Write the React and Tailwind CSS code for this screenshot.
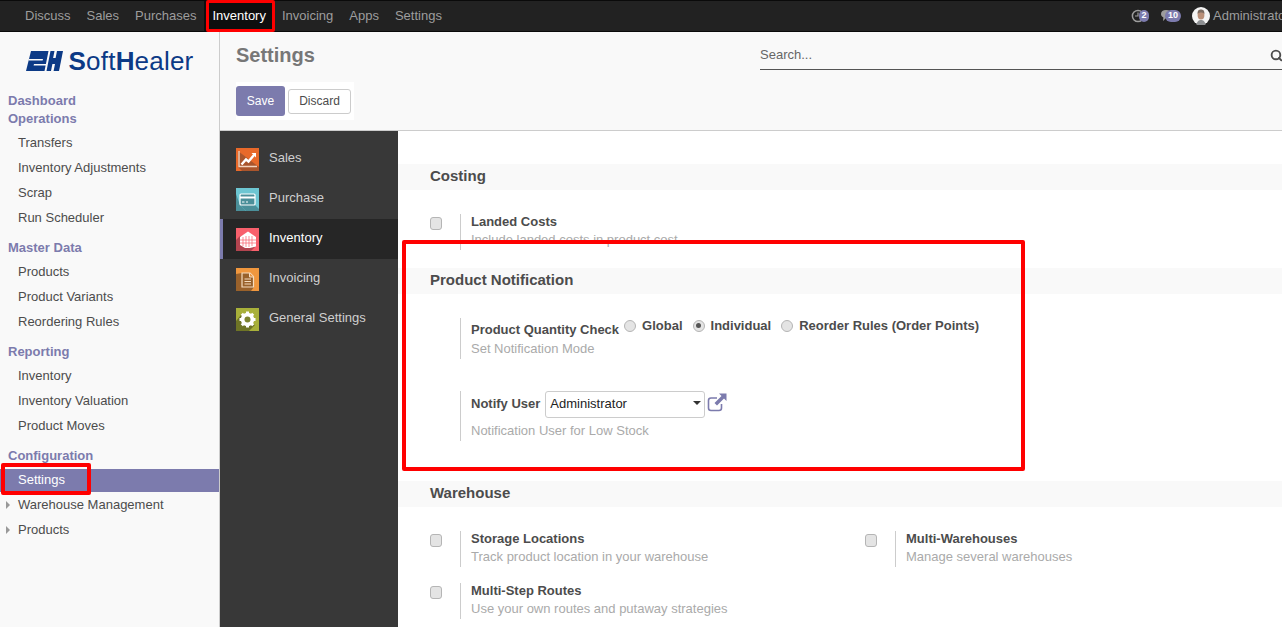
import { Search } from 'lucide-react';

const topMenu = ['Discuss', 'Sales', 'Purchases', 'Inventory', 'Invoicing', 'Apps', 'Settings'];

const sideMenu = [
  { title: 'Operations', items: ['Transfers', 'Inventory Adjustments', 'Scrap', 'Run Scheduler'] },
  { title: 'Master Data', items: ['Products', 'Product Variants', 'Reordering Rules'] },
  { title: 'Reporting', items: ['Inventory', 'Inventory Valuation', 'Product Moves'] },
];

// little app icons with the long shadow
const SalesIcon = () => (
  <svg width="23" height="23" viewBox="0 0 23 23">
    <rect width="23" height="23" fill="#e8692a" />
    <path d="M2 3 V19 L6 23 H23 V19 Z" fill="#a9552c" />
    <path d="M3 3 V18.5 H21" fill="none" stroke="#f3d3bd" strokeWidth="1.4" />
    <path d="M5.5 16.5 L10 11.5 L12.5 13.5 L18 7" fill="none" stroke="#fff" strokeWidth="2.4" />
    <path d="M15.5 5 H20 V9.5 Z" fill="#fff" />
  </svg>
);

const PurchaseIcon = () => (
  <svg width="23" height="23" viewBox="0 0 23 23">
    <rect width="23" height="23" fill="#6dc6d2" />
    <path d="M4 17 L10 23 H0 V6 Z" fill="#4b8f99" />
    <path d="M4 17 H19 L23 21 V23 H10 Z" fill="#4b8f99" />
    <rect x="4" y="6" width="15" height="11" rx="1" fill="#4b8f99" stroke="#fff" strokeWidth="1.2" />
    <rect x="4" y="8.5" width="15" height="2" fill="#fff" />
    <path d="M6 14 H8.5 M10 14 H12" stroke="#fff" strokeWidth="1" />
  </svg>
);

const InventoryIcon = () => (
  <svg width="23" height="23" viewBox="0 0 23 23">
    <rect width="23" height="23" fill="#f8606c" />
    <path d="M0 12 L4 8 L20 18 L15 23 H0 Z" fill="#b2444f" />
    <path d="M4 9 L12 3.5 L20 9 V18.5 L14 20 H9 L4 17 Z" fill="#fff" />
    <path d="M7 9 V18 M10 8 V19 M13 8 V19 M16 8 V18 M4 12 H20 M4 15 H20" stroke="#f8606c" strokeWidth="0.7" />
  </svg>
);

const InvoicingIcon = () => (
  <svg width="23" height="23" viewBox="0 0 23 23">
    <rect width="23" height="23" fill="#f0973e" />
    <path d="M0 6 L6 5 L18 19 L15 23 H0 Z" fill="#99612b" />
    <path d="M6 5 H14 L17.5 8.5 V19 H6 Z" fill="#99612b" stroke="#f5dcc0" strokeWidth="1.2" />
    <path d="M13.5 5 V9 H17.5" fill="#f0973e" stroke="#f5dcc0" strokeWidth="1" />
    <path d="M8.5 11 H15 M8.5 13.5 H15 M8.5 16 H15" stroke="#f5dcc0" strokeWidth="1.2" />
  </svg>
);

const GeneralIcon = () => (
  <svg width="23" height="23" viewBox="0 0 23 23">
    <rect width="23" height="23" fill="#a8b03a" />
    <path d="M0 13 L5 7 L19 17 L13 23 H0 Z" fill="#6e7426" />
    <circle cx="11.5" cy="11.5" r="5" fill="none" stroke="#fff" strokeWidth="3.4" />
    <path d="M11.5 3.5 V19.5 M3.5 11.5 H19.5 M5.8 5.8 L17.2 17.2 M17.2 5.8 L5.8 17.2" stroke="#fff" strokeWidth="3" />
    <circle cx="11.5" cy="11.5" r="3" fill="#7d8430" />
  </svg>
);

const settingsTabs = [
  { label: 'Sales', Icon: SalesIcon },
  { label: 'Purchase', Icon: PurchaseIcon },
  { label: 'Inventory', Icon: InventoryIcon, active: true },
  { label: 'Invoicing', Icon: InvoicingIcon },
  { label: 'General Settings', Icon: GeneralIcon },
];

const Logo = () => (
  <div className="flex items-center h-[20px]">
    <svg width="37" height="20" viewBox="0 0 37 20" className="mr-[6px]">
      <path d="M5 0 H37 L33 20 H0 Z" fill="#0c3a86" />
      <path d="M3 8 H17 L16.6 9.5 H2.6 Z M8 13 H21 L20.6 14.5 H7.6 Z M22.5 0 H24.5 L20.5 20 H18.5 Z M28.5 0 H31 L29.6 7 H27.1 Z M26.4 13 H29 L27.6 20 H25 Z" fill="#fafafa" />
    </svg>
    <span className="text-[26px] leading-none text-[#0c3a86] tracking-[0.2px]">
      <span className="font-bold">S</span>oft<span className="font-bold">H</span>ealer
    </span>
  </div>
);

const Avatar = () => (
  <svg width="18" height="18" viewBox="0 0 18 18">
    <circle cx="9" cy="9" r="9" fill="#f4f4f4" />
    <path d="M4.5 18 C5 14 7 13 9 13 C11 13 13 14 13.5 18 Z" fill="#8d8f92" />
    <ellipse cx="9" cy="8" rx="3.4" ry="4.6" fill="#b98f78" />
    <path d="M5.6 7 C5.4 3 7 2.4 9 2.4 C11 2.4 12.6 3 12.4 7 C11.5 5 6.5 5 5.6 7 Z" fill="#7a6a60" />
  </svg>
);

const Check = () => (
  <span className="block w-[12px] h-[13px] rounded-[3px] bg-[#e4e4e4] border border-[#b5b5b5]" />
);

const Radio = ({ checked }) => (
  <span className="flex items-center justify-center w-[12px] h-[12px] rounded-full bg-[#e4e4e4] border border-[#b5b5b5]">
    {checked && <span className="block w-[5px] h-[5px] rounded-full bg-[#555]" />}
  </span>
);

const Setting = ({ title, help }) => (
  <div className="flex h-[36px]">
    <div className="w-[30px] pt-[3px]">
      <Check />
    </div>
    <div className="border-l border-[#ccc] pl-[10px]">
      <div className="font-bold leading-[15px] text-[#4c4c4c]">{title}</div>
      <div className="mt-[3px] leading-[15px] text-[#aaa]">{help}</div>
    </div>
  </div>
);

const SectionTitle = ({ children }) => (
  <div className="h-[26px] bg-[#f9f9f9] pl-[32px] text-[15px] font-bold leading-[24px] text-[#4c4c4c]">
    {children}
  </div>
);

export default function App() {
  return (
    <div className="relative w-[1282px] h-[627px] overflow-hidden bg-white font-['Liberation_Sans',Arial,sans-serif] text-[13px] text-[#4c4c4c]">
      {/* top bar */}
      <nav className="flex items-center justify-between h-[32px] pl-[17px] bg-[#222] border-y border-[#0a0a0a]">
        <ul className="flex h-full">
          {topMenu.map((item) => (
            <li
              key={item}
              className={`flex items-center px-[8px] ${item === 'Inventory' ? 'bg-[#0e0e0e] text-white' : 'text-[#9d9d9d]'}`}
            >
              {item}
            </li>
          ))}
        </ul>
        <div className="flex items-center w-[151px] shrink-0 overflow-hidden whitespace-nowrap text-[#9d9d9d]">
          <div className="relative shrink-0 w-[18px] h-[14px] mr-[11px]">
            <svg width="14" height="14" viewBox="0 0 14 14" className="absolute left-0 top-0">
              <circle cx="7" cy="7" r="5.6" fill="none" stroke="#9d9d9d" strokeWidth="1.5" />
              <path d="M7 3.5 V7 H4" fill="none" stroke="#9d9d9d" strokeWidth="1.2" />
            </svg>
            <span className="absolute right-0 top-[1px] flex items-center justify-center w-[10px] h-[12px] rounded-full bg-[#7c7bad] text-[9px] font-bold text-white">2</span>
          </div>
          <div className="relative shrink-0 w-[21px] h-[14px] mr-[11px]">
            <svg width="12" height="13" viewBox="0 0 12 13" className="absolute left-0 top-0">
              <path d="M6 1 C9 1 11 2.6 11 5 C11 7.4 9 9 6 9 L3 12 L3.4 8.4 C1.8 7.6 1 6.4 1 5 C1 2.6 3 1 6 1 Z" fill="#9d9d9d" />
            </svg>
            <span className="absolute right-0 top-[1px] flex items-center justify-center w-[16px] h-[12px] rounded-full bg-[#7c7bad] text-[9px] font-bold text-white">10</span>
          </div>
          <div className="mr-[3px] w-[18px] h-[18px] shrink-0">
            <Avatar />
          </div>
          <span>Administrator</span>
        </div>
      </nav>

      <div className="flex h-[595px]">
        {/* left menu */}
        <aside className="w-[220px] shrink-0 h-full bg-[#f9f9f9] border-r border-[#ccc]">
          <div className="flex justify-center h-[59px] pt-[19px]">
            <Logo />
          </div>
          <div className="pl-[8px] h-[18px] font-bold leading-[20px] text-[#7c7bad]">Dashboard</div>
          {sideMenu.map((group) => (
            <div key={group.title} className="mb-[8px]">
              <div className="pl-[8px] h-[18px] mb-[3px] font-bold leading-[20px] text-[#7c7bad]">{group.title}</div>
              {group.items.map((item) => (
                <div key={item} className="h-[25px] pl-[18px] leading-[25px] text-[#4c4c4c]">{item}</div>
              ))}
            </div>
          ))}
          <div className="pl-[8px] h-[18px] mb-[5px] font-bold leading-[20px] text-[#7c7bad]">Configuration</div>
          <div className="h-[23px] pl-[18px] leading-[22px] bg-[#7c7bad] text-white">Settings</div>
          {['Warehouse Management', 'Products'].map((item) => (
            <div key={item} className="flex items-center h-[25px] pl-[6px]">
              <span className="w-0 h-0 mr-[8px] border-y-[4px] border-y-transparent border-l-[4px] border-l-[#999]" />
              <span>{item}</span>
            </div>
          ))}
        </aside>

        <main className="flex-1 min-w-0 flex flex-col">
          {/* control panel */}
          <header className="flex justify-between h-[99px] shrink-0 pl-[16px] bg-[#f9f9f9] border-b border-[#ccc]">
            <div>
              <h1 className="mt-[11px] text-[20px] font-bold leading-[24px] text-[#777]">Settings</h1>
              <div className="flex items-center w-[118px] h-[38px] mt-[15px] bg-white">
                <button className="w-[49px] h-[30px] rounded-[3px] bg-[#7c7bad] text-[12px] text-white">Save</button>
                <button className="w-[63px] h-[25px] ml-[3px] rounded-[3px] bg-white border border-[#ccc] text-[12px] text-[#4c4c4c]">Discard</button>
              </div>
            </div>
            <div className="flex items-center justify-between self-start w-[522px] h-[38px] pt-[9px] border-b border-[#555]">
              <span className="text-[#666]">Search...</span>
              <Search size={13} strokeWidth={3.4} className="shrink-0 text-[#4c4c4c] mr-[-1px]" />
            </div>
          </header>

          <div className="flex flex-1 min-h-0">
            {/* settings tabs */}
            <div className="w-[178px] shrink-0 bg-[#383838] pt-[8px]">
              {settingsTabs.map(({ label, Icon, active }) => (
                <div
                  key={label}
                  className={`flex items-center h-[40px] gap-[10px] ${active ? 'pl-[13px] border-l-[3px] border-[#7c7bad] bg-[#262626] text-white' : 'pl-[16px] text-[#cfcfcf]'}`}
                >
                  <Icon />
                  <span className="mb-[2px]">{label}</span>
                </div>
              ))}
            </div>

            {/* settings content */}
            <div className="flex-1 min-w-0 pt-[33px] overflow-hidden">
              <SectionTitle>Costing</SectionTitle>
              <div className="pl-[32px] pt-[24px] h-[78px]">
                <Setting title="Landed Costs" help="Include landed costs in product cost" />
              </div>

              <SectionTitle>Product Notification</SectionTitle>
              <div className="pl-[62px] pt-[24px] h-[187px]">
                <div className="h-[41px] border-l border-[#ccc] pl-[10px]">
                  <div className="flex items-start">
                    <span className="mt-[4px] font-bold leading-[15px]">Product Quantity Check</span>
                    <div className="flex items-center ml-[5px] font-bold leading-[15px]">
                      <Radio />
                      <span className="ml-[6px] mr-[10px]">Global</span>
                      <Radio checked />
                      <span className="ml-[6px] mr-[10px]">Individual</span>
                      <Radio />
                      <span className="ml-[6px]">Reorder Rules (Order Points)</span>
                    </div>
                  </div>
                  <div className="mt-[4px] leading-[15px] text-[#aaa]">Set Notification Mode</div>
                </div>
                <div className="h-[50px] mt-[32px] border-l border-[#ccc] pl-[10px]">
                  <div className="flex items-start">
                    <span className="mt-[5px] font-bold leading-[15px]">Notify User</span>
                    <div className="relative flex items-center w-[160px] h-[27px] ml-[5px] pl-[4px] pb-[2px] bg-white border border-[#ccc] rounded-[3px] text-[#222]">
                      Administrator
                      <span className="absolute right-[3px] top-[9px] w-0 h-0 border-x-[4px] border-x-transparent border-t-[4px] border-t-[#333]" />
                    </div>
                    <svg width="20" height="19" viewBox="0 0 20 19" className="ml-[2px] mt-[2px]">
                      <path d="M10 5 H4 Q1.5 5 1.5 7.5 V15 Q1.5 17.5 4 17.5 H12 Q14.5 17.5 14.5 15 V11" fill="none" stroke="#7c7bad" strokeWidth="1.6" />
                      <path d="M12 0.5 H19.5 V8 L17 5.5 L10 12.5 L7.5 10 L14.5 3 Z" fill="#7c7bad" />
                    </svg>
                  </div>
                  <div className="mt-[5px] leading-[15px] text-[#aaa]">Notification User for Low Stock</div>
                </div>
              </div>

              <SectionTitle>Warehouse</SectionTitle>
              <div className="grid grid-cols-[435px_1fr] gap-y-[16px] pl-[32px] pt-[24px]">
                <Setting title="Storage Locations" help="Track product location in your warehouse" />
                <Setting title="Multi-Warehouses" help="Manage several warehouses" />
                <Setting title="Multi-Step Routes" help="Use your own routes and putaway strategies" />
              </div>
            </div>
          </div>
        </main>
      </div>

      {/* red annotation boxes */}
      <div className="absolute left-[206px] top-0 w-[69px] h-[32px] rounded-[2px] border-[3px] border-[#f00]" />
      <div className="absolute left-[1px] top-[463px] w-[90px] h-[32px] rounded-[2px] border-[4px] border-[#f00]" />
      <div className="absolute left-[402px] top-[240px] w-[623px] h-[231px] rounded-[2px] border-[4px] border-[#f00]" />
    </div>
  );
}
